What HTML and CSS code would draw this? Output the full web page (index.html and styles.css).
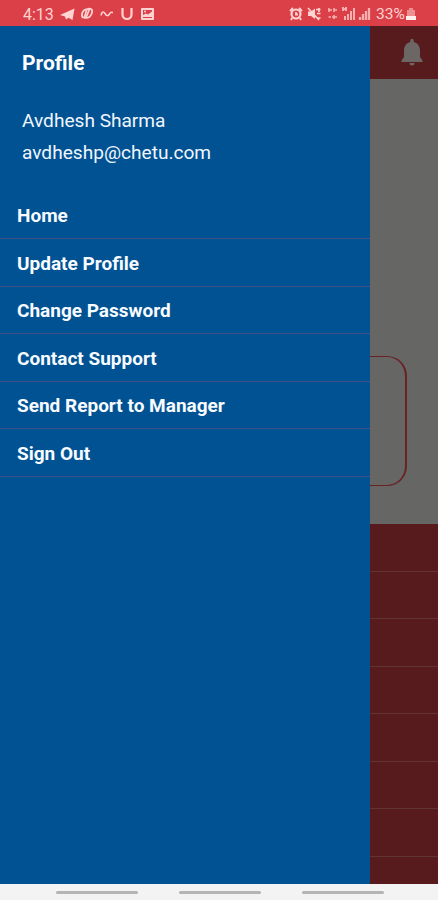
FILE: index.html
```html
<!DOCTYPE html>
<html lang="en">
<head>
<meta charset="utf-8">
<title>Profile</title>
<link rel="stylesheet" href="styles.css">
</head>
<body>
<div class="screen">
  <header class="status">
    <span class="time">4:13</span>
    <svg class="icons-left" width="98" height="26" viewBox="59 0 98 26" fill="none" stroke="#ffd3d2" stroke-width="1.8">
      <path d="M60 15 74.500 8.500 72.500 20 68.500 17.800 66 19.500 65 16.500Z" fill="#ffd3d2" stroke="none"/>
      <path d="M83 18C80.500 15 82.500 9.500 87 9L84 18.500M87 9C91 7.500 93.500 10 91.500 14 90.500 16.500 88.500 18 86 18L89.500 9" stroke-width="1.700"/>
      <path d="M101 15.500C101.500 12 103.500 11 105 13.500S108 16.500 109.500 14 112 12.500 113 12.500" stroke-width="1.500"/>
      <path d="M122.500 8V14.500A4.500 4.500 0 0 0 131.500 14.500V8" stroke-width="2.200"/>
      <path fill-rule="evenodd" d="M142 8H153Q154 8 154 9V19Q154 20 153 20H142Q141 20 141 19V9Q141 8 142 8ZM143 10V15L146 13.500 148 14.500 152 11.500V10ZM143 17V18H152V17Z" fill="#ffd3d2" stroke="none"/><circle cx="145" cy="11.500" r="1" fill="#ffd3d2" stroke="none"/>
    </svg>
    <svg class="icons-right" width="84" height="26" viewBox="288 0 84 26" fill="none" stroke="#ffd3d2" stroke-width="1.800">
      <circle cx="296" cy="14" r="4.500" stroke-width="2.200"/><path d="M290 11 293 8M299 8 302 11M292 18 291 20M300 18 301 20M296 12V14.500H298"/>
      <path d="M308 11.500H311L315 8.500V19L311 16H308Z" fill="#ffd3d2" stroke="none"/><path d="M308 8 319 20M316 9.500H320.500M317 13.500H320.500M317 18H320.500M319 8V12" stroke-width="1.600"/>
      <g opacity=".75"><path d="M329 8V12M328 10H332M334 8V12M334 10H337M328.500 17H331M334 15V19M332 17H337" stroke-width="1.600"/>
      <path d="M343 7V11M346 7V11M343 9H346M345 16V20M348 14V20M351 11V20M354 8V20" stroke-width="2"/>
      <path d="M360 17V20M363 14V20M366 11V20M369 8V20" stroke-width="2.300"/></g>
    </svg>
    <span class="percent">33%</span>
    <svg class="battery" width="11" height="26" viewBox="0 0 11 26"><path d="M4 8H8V10H10V16H2V10H4Z" fill="#ed8f90"/><path d="M1 16H11V20H1Z" fill="#fff0ee"/></svg>
  </header>
  <div class="body">
    <aside class="drawer">
      <h1>Profile</h1>
      <div class="user"><p class="name">Avdhesh Sharma</p><p class="mail">avdheshp@chetu.com</p></div>
      <nav>
        <a><span>Home</span></a><a><span>Update Profile</span></a><a><span>Change Password</span></a><a><span>Contact Support</span></a><a><span>Send Report to Manager</span></a><a><span>Sign Out</span></a>
      </nav>
    </aside>
    <main class="page">
      <div class="topbar"><svg width="24" height="32" viewBox="0 0 24 32" fill="#6c6765"><path d="M10.300 4V2.500A1.700 1.700 0 0 1 13.700 2.500V4C18 5 20 8.500 20 13V19L22.500 22.500V24H1.500V22.500L4 19V13C4 8.500 6 5 10.300 4ZM9.500 25H14.500A2.500 2.500 0 0 1 9.500 25Z"/></svg></div>
      <div class="content"><div class="card"></div></div>
      <div class="rows"><i></i><i></i><i></i><i></i><i></i><i></i><i></i><i></i></div>
    </main>
  </div>
  <footer class="navbar"><b></b><b></b><b></b></footer>
</div>
</body>
</html>
```
FILE: styles.css
```css
* { box-sizing: border-box; }
body { margin: 0; font-family: Roboto, sans-serif; color: #f0f6ff; }
h1, p { margin: 0; }
svg { display: block; flex: none; }
.screen { width: 438px; height: 900px; overflow: hidden; display: flex; flex-direction: column; }
.status { height: 26px; flex: none; display: flex; background: #db4048; color: #ffd3d2; font-size: 16px; line-height: 29px; padding-left: 23px; }
.time { width: 36px; }
.icons-right { margin-left: 131px; }
.percent { width: 29px; margin-left: 4px; font-size: 15.5px; white-space: nowrap; }
.body { height: 858px; flex: none; display: flex; }
.drawer { width: 370px; background: #005292; }
h1 { padding: 23px 22px 0; font-size: 21px; line-height: 28px; font-weight: 700; color: #fff; }
.user { padding: 28px 22px 0; font-size: 19.1px; line-height: 32px; }
nav { padding-top: 22.5px; }
nav a { display: flex; align-items: center; height: 47.5px; padding: 2px 0 0 17px; border-bottom: 1px solid #3f5088; font-size: 19px; font-weight: 700; color: #f8fbff; white-space: nowrap; }
.page { width: 68px; background: #666765; }
.topbar { height: 53px; background: #571b1d; padding: 12px 0 0 30px; }
.content { height: 445px; padding-top: 277px; }
.card { width: 37px; height: 130px; border: 1.5px solid #6b2024; border-right-width: 2px; border-left: 0; border-radius: 0 20px 20px 0; }
.rows { height: 360px; overflow: hidden; background: #571b1d; }
.rows i { display: block; height: 47.5px; border-bottom: 1px solid #5f3433; }
.navbar { height: 16px; background: #f3f3f3; display: flex; gap: 41px; padding: 7px 0 0 56px; }
.navbar b { width: 82px; height: 3px; border-radius: 2px; background: #b5b5b5; }
```
